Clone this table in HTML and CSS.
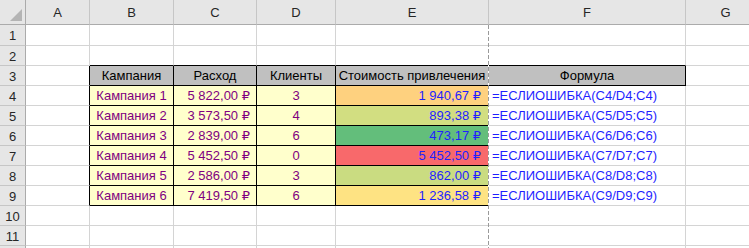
FILE: index.html
```html
<!DOCTYPE html>
<html lang="ru">
<head>
<meta charset="utf-8">
<title>Стоимость привлечения</title>
<link rel="stylesheet" href="styles.css">
</head>
<body>
<div class="sheet">
  <div class="grid">
    <!-- column headers -->
    <div class="ch corner"><span class="tri"></span></div>
    <div class="ch">A</div><div class="ch">B</div><div class="ch">C</div><div class="ch">D</div>
    <div class="ch">E</div><div class="ch">F</div><div class="ch">G</div>

    <!-- row 1 -->
    <div class="rh">1</div><div class="c"></div><div class="c"></div><div class="c"></div><div class="c"></div><div class="c"></div><div class="c"></div><div class="c"></div>
    <!-- row 2 -->
    <div class="rh">2</div><div class="c"></div><div class="c bb"></div><div class="c bb"></div><div class="c bb"></div><div class="c bb"></div><div class="c bb"></div><div class="c"></div>
    <!-- row 3: table head -->
    <div class="rh">3</div><div class="c br"></div>
    <div class="c th">Кампания</div><div class="c th">Расход</div><div class="c th">Клиенты</div><div class="c th">Стоимость привлечения</div><div class="c th">Формула</div>
    <div class="c"></div>

    <div class="rh">4</div><div class="c br"></div>
    <div class="c td name">Кампания 1</div><div class="c td num">5 822,00 ₽</div><div class="c td mid">3</div>
    <div class="c td cost" style="background:#fed17f">1 940,67 ₽</div><div class="c fx">=ЕСЛИОШИБКА(C4/D4;C4)</div><div class="c"></div>

    <div class="rh">5</div><div class="c br"></div>
    <div class="c td name">Кампания 2</div><div class="c td num">3 573,50 ₽</div><div class="c td mid">4</div>
    <div class="c td cost" style="background:#d2de81">893,38 ₽</div><div class="c fx">=ЕСЛИОШИБКА(C5/D5;C5)</div><div class="c"></div>

    <div class="rh">6</div><div class="c br"></div>
    <div class="c td name">Кампания 3</div><div class="c td num">2 839,00 ₽</div><div class="c td mid">6</div>
    <div class="c td cost" style="background:#63be7b">473,17 ₽</div><div class="c fx">=ЕСЛИОШИБКА(C6/D6;C6)</div><div class="c"></div>

    <div class="rh">7</div><div class="c br"></div>
    <div class="c td name">Кампания 4</div><div class="c td num">5 452,50 ₽</div><div class="c td mid">0</div>
    <div class="c td cost" style="background:#f8696b">5 452,50 ₽</div><div class="c fx">=ЕСЛИОШИБКА(C7/D7;C7)</div><div class="c"></div>

    <div class="rh">8</div><div class="c br"></div>
    <div class="c td name">Кампания 5</div><div class="c td num">2 586,00 ₽</div><div class="c td mid">3</div>
    <div class="c td cost" style="background:#cadc81">862,00 ₽</div><div class="c fx">=ЕСЛИОШИБКА(C8/D8;C8)</div><div class="c"></div>

    <div class="rh">9</div><div class="c br"></div>
    <div class="c td name">Кампания 6</div><div class="c td num">7 419,50 ₽</div><div class="c td mid">6</div>
    <div class="c td cost" style="background:#fee383">1 236,58 ₽</div><div class="c fx">=ЕСЛИОШИБКА(C9/D9;C9)</div><div class="c"></div>

    <div class="rh">10</div><div class="c"></div><div class="c"></div><div class="c"></div><div class="c"></div><div class="c"></div><div class="c"></div><div class="c"></div>
    <div class="rh">11</div><div class="c"></div><div class="c"></div><div class="c"></div><div class="c"></div><div class="c"></div><div class="c"></div><div class="c"></div>
    <div class="rh"></div><div class="c"></div><div class="c"></div><div class="c"></div><div class="c"></div><div class="c"></div><div class="c"></div><div class="c"></div>
  </div>
  <!-- page break between columns E and F -->
  <div class="page-break"></div>
</div>
</body>
</html>
```

FILE: styles.css
```css
html, body {
  margin: 0;
  padding: 0;
  background: #ffffff;
  overflow: hidden;
}

.sheet {
  position: relative;
  width: 749px;
  height: 248px;
  overflow: hidden;
  font-family: "Liberation Sans", "DejaVu Sans", Arial, sans-serif;
  font-size: 13px;
}

.grid {
  display: grid;
  grid-template-columns: 26px 64px 84px 83px 79px 153px 197px 80px;
  grid-template-rows: 25px 21px repeat(11, 20px);
}

.grid > div {
  box-sizing: border-box;
  display: flex;
  align-items: center;
  white-space: nowrap;
  overflow: hidden;
}

/* column and row headers */
.ch {
  position: relative;
  justify-content: center;
  background: #e6e6e6;
  color: #262626;
  border-right: 1px solid #c6c6c6;
  border-bottom: 1px solid #ababab;
  padding-top: 1px;
}

.ch.corner {
  border-right-color: #ababab;
}

.tri {
  position: absolute;
  right: 3px;
  bottom: 3px;
  width: 12px;
  height: 12px;
  background: #b4b4b4;
  clip-path: polygon(100% 0, 100% 100%, 0 100%);
}

.rh {
  justify-content: center;
  background: #e6e6e6;
  color: #262626;
  border-right: 1px solid #ababab;
  border-bottom: 1px solid #c6c6c6;
  padding-top: 1px;
}

/* ordinary cells with gridlines */
.c {
  border-right: 1px solid #d4d4d4;
  border-bottom: 1px solid #d4d4d4;
}

.c.bb { border-bottom-color: #000; }
.c.br { border-right-color: #000; }

/* table block */
.th {
  justify-content: center;
  background: #c0c0c0;
  color: #000;
  border-right-color: #000 !important;
  border-bottom-color: #000 !important;
}

.td {
  background: #ffffcc;
  color: #800080;
  border-right-color: #000 !important;
  border-bottom-color: #000 !important;
}

.name, .mid { justify-content: center; }

.num {
  justify-content: flex-end;
  padding-right: 6px;
}

.cost {
  justify-content: flex-end;
  padding-right: 7px;
  color: #1f1fff;
}

.fx {
  padding-left: 3px;
  color: #1f1fff;
}

.page-break {
  position: absolute;
  left: 488px;
  top: 25px;
  width: 1px;
  bottom: 0;
  background: repeating-linear-gradient(to bottom, #9a9a9a 0 4px, #ffffff 4px 6px);
}
```
